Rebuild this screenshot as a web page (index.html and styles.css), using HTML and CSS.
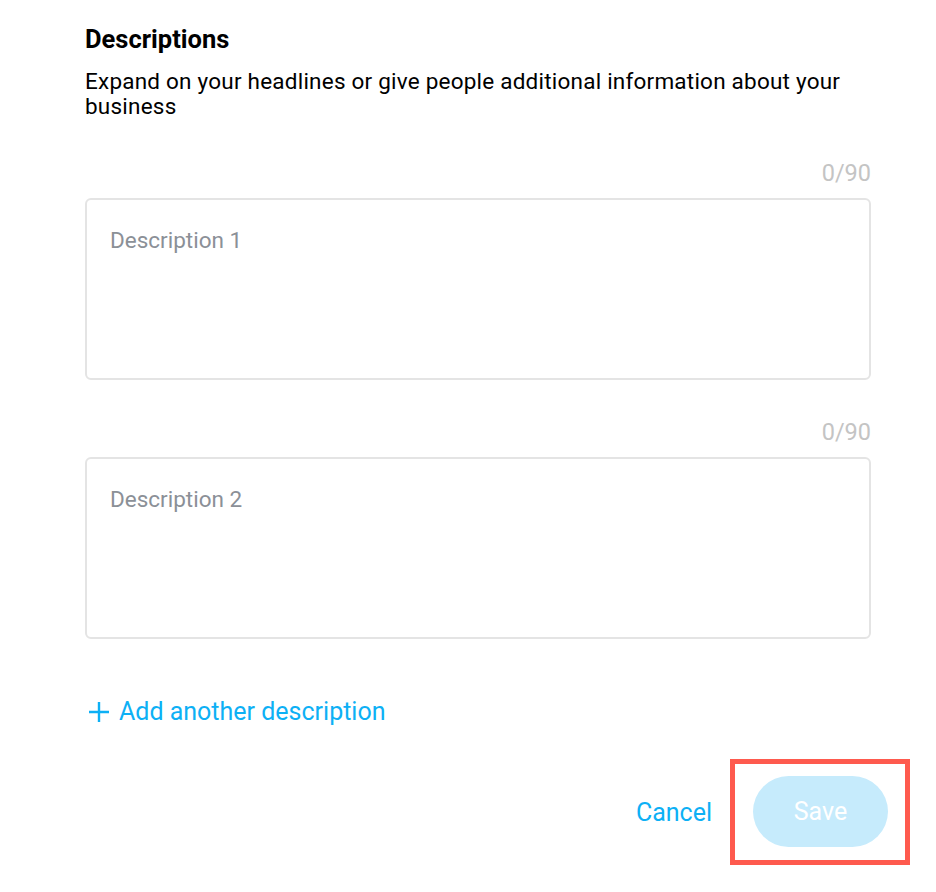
FILE: index.html
```html
<!DOCTYPE html>
<html lang="en">
<head>
    <meta charset="UTF-8">
    <meta name="viewport" content="width=device-width, initial-scale=1.0">
    <title>Descriptions</title>
    <link rel="stylesheet" href="styles.css">
</head>
<body>
    <div id="container">
        <h2 class="section-title">Descriptions</h2>
        <p class="section-text">Expand on your headlines or give people additional information about your business</p>

        <div class="field">
            <div class="counter">0/90</div>
            <textarea class="desc-input" placeholder="Description 1"></textarea>
        </div>
        <div class="field">
            <div class="counter">0/90</div>
            <textarea class="desc-input" placeholder="Description 2"></textarea>
        </div>

        <a class="add-link" href="#">
            <svg width="20" height="20" viewBox="0 0 20 20"><path d="M10 0v20M0 10h20" stroke="currentColor" stroke-width="2.4" fill="none"/></svg>
            Add another description
        </a>

        <div class="actions">
            <button class="cancel-btn" type="button">Cancel</button>
            <div class="highlight">
                <button class="save-btn" type="button" disabled>Save</button>
            </div>
        </div>
    </div>
</body>
</html>
```

FILE: styles.css
```css
body {
    font-family: Roboto, "Liberation Sans", sans-serif;
    background-color: #ffffff;
    color: #000000;
    margin: 0;
    padding: 0;
}
#container {
    width: 786px;
    margin-left: 85px;
    padding-top: 24px;
}
.section-title {
    font-size: 25.5px;
    font-weight: 700;
    line-height: 30px;
    margin: 0 0 15px 0;
}
.section-text {
    font-size: 22.5px;
    line-height: 25px;
    letter-spacing: 0.22px;
    margin: 0 0 40px 0;
}
.field {
    display: flex;
    flex-direction: column;
}
.field + .field {
    margin-top: 38px;
}
.counter {
    align-self: flex-end;
    font-size: 23.5px;
    line-height: 28px;
    color: #c4c4c4;
    margin-bottom: 11px;
}
.desc-input {
    box-sizing: border-box;
    height: 182px;
    border: 2px solid #e4e4e4;
    border-radius: 6px;
    padding: 27px 23px;
    font-family: inherit;
    font-size: 22.5px;
    resize: none;
    outline: none;
}
.desc-input::placeholder {
    color: #8b9097;
}
.add-link {
    display: inline-flex;
    align-items: center;
    gap: 10px;
    margin-top: 58px;
    margin-left: 4px;
    font-size: 25px;
    line-height: 30px;
    color: #0db0f5;
    text-decoration: none;
}
.actions {
    display: flex;
    justify-content: flex-end;
    align-items: center;
    gap: 18px;
    margin-top: 32px;
    margin-right: -39px;
}
.cancel-btn {
    background: none;
    border: none;
    padding: 0;
    font-family: inherit;
    font-size: 25px;
    color: #0db0f5;
}
.highlight {
    border: 5px solid #fe5a4e;
    padding: 12px 17px 13px 18px;
}
.save-btn {
    display: block;
    width: 135px;
    height: 71px;
    border: none;
    border-radius: 36px;
    background-color: #c6ebfc;
    color: #ffffff;
    font-family: inherit;
    font-size: 25px;
}
```
